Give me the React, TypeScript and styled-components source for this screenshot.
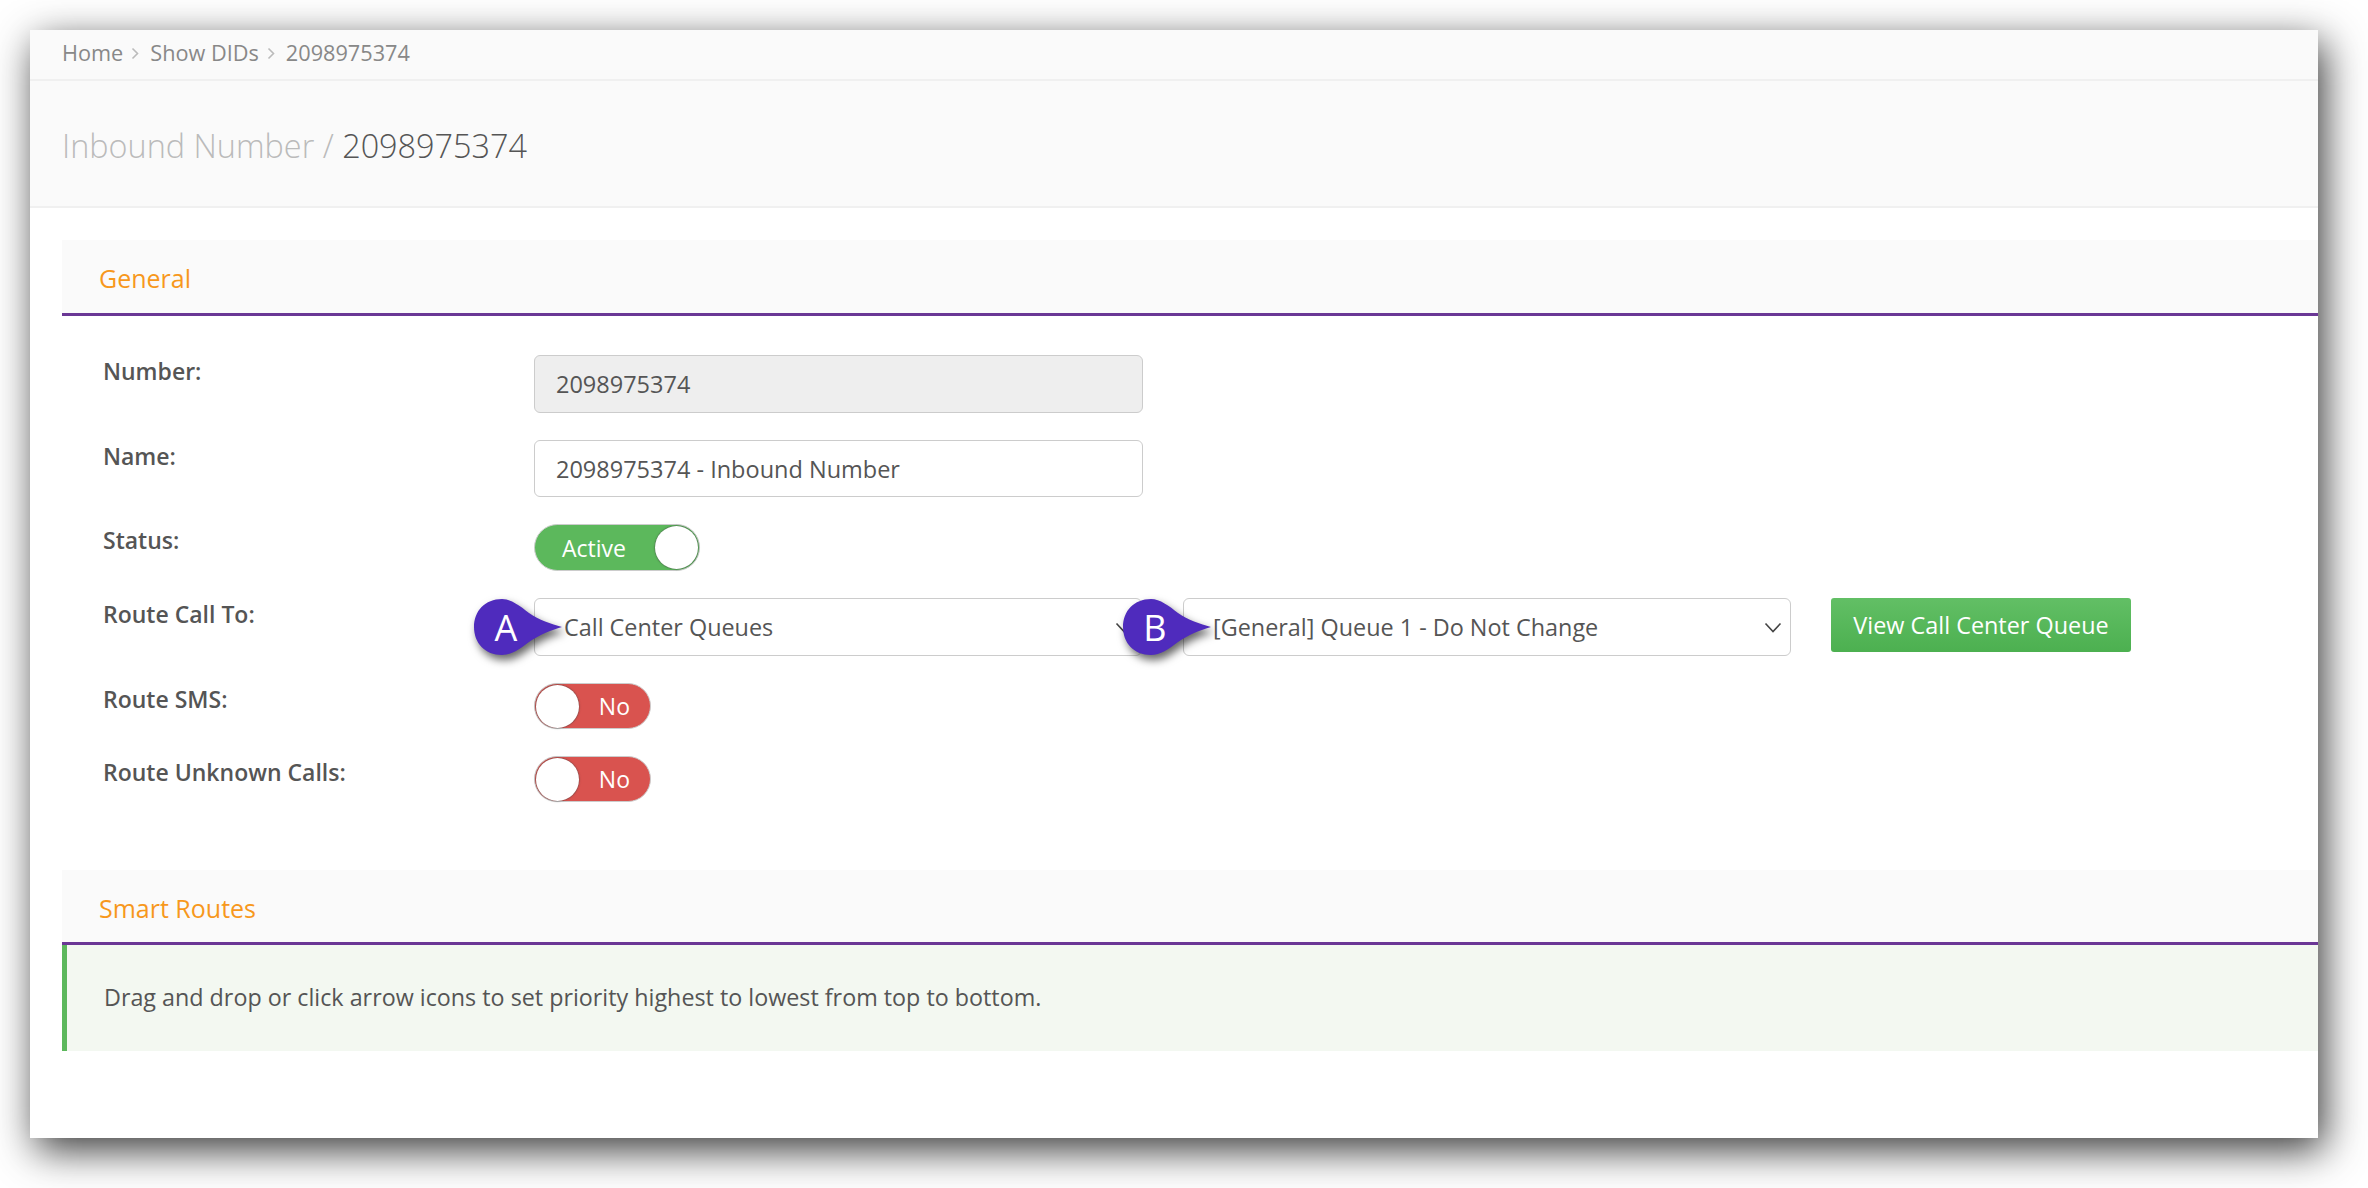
import styled, { createGlobalStyle } from "styled-components"

const Global = createGlobalStyle`
    html, body {
        margin: 0;
        background: #fff;
    }
    * {
        box-sizing: border-box;
    }
`

const Stage = styled.div`
    width: 2368px;
    height: 1188px;
    padding: 30px 50px 50px 30px;
    overflow: hidden;
    font-family: "Open Sans", sans-serif;
    color: #555;
`

const Window = styled.div`
    width: 2288px;
    height: 1108px;
    background: #fff;
    box-shadow: 6px 12px 38px rgba(0, 0, 0, 0.78);
    overflow: hidden;
`

const Breadcrumb = styled.div`
    height: 51px;
    padding: 0 33px 4px 32px;
    display: flex;
    align-items: center;
    background: #fafafa;
    border-bottom: 2px solid #f0f0f0;
    font-size: 21.7px;
    color: #888;
`

const Crumb = styled.span`
    color: #888;
`

const CrumbArrow = styled.svg`
    width: 8px;
    height: 13px;
    margin: 1px 11px 0 8px;
    fill: none;
    stroke: #bbb;
    stroke-width: 1.6;
`

const TitleBand = styled.div`
    height: 127px;
    padding: 2px 32px 0;
    display: flex;
    align-items: center;
    background: #fafafa;
    border-bottom: 2px solid #f0f0f0;
    font-size: 32.4px;
    font-weight: 300;
`

const TitleMuted = styled.span`
    color: #bbb;
    white-space: pre;
`

const TitleStrong = styled.span`
    color: #555;
`

const Section = styled.section<{ $top: number }>`
    margin: ${(p) => p.$top}px 0 0 32px;
`

const SectionHead = styled.div<{ $height: number }>`
    height: ${(p) => p.$height}px;
    padding: 3px 37px 0;
    display: flex;
    align-items: center;
    background: #fafafa;
    border-bottom: 3px solid #6a3795;
    font-size: 25px;
    color: #f7981c;
`

const Form = styled.div`
    padding-top: 39px;
    display: flex;
    flex-direction: column;
    gap: 27px;
`

const Row = styled.div`
    display: flex;
    align-items: flex-start;
`

const Label = styled.div`
    width: 472px;
    padding-left: 41px;
    flex: none;
    font-size: 23px;
    font-weight: 600;
    line-height: 33px;
    color: #555;
`

const Input = styled.div<{ $disabled?: boolean }>`
    width: 609px;
    height: ${(p) => (p.$disabled ? 58 : 57)}px;
    padding: 0 21px;
    display: flex;
    align-items: center;
    font-size: 23.5px;
    color: #555;
    background: ${(p) => (p.$disabled ? "#eee" : "#fff")};
    border: 1.5px solid #ccc;
    border-radius: 6px;
`

const SelectBox = styled.div<{ $gap: number }>`
    position: relative;
    width: 608px;
    height: 58px;
    margin-left: ${(p) => p.$gap}px;
    padding: 0 8px 0 29px;
    display: flex;
    align-items: center;
    justify-content: space-between;
    font-size: 23.4px;
    color: #555;
    background: #fff;
    border: 1.5px solid #ccc;
    border-radius: 6px;
`

const Chevron = styled.svg`
    width: 18px;
    height: 11px;
    fill: none;
    stroke: #444;
    stroke-width: 1.6;
`

const Pin = styled.div`
    position: absolute;
    left: -62px;
    top: -1px;
    width: 90px;
    height: 58px;
    display: flex;
    align-items: center;
    padding-left: 20px;
    font-size: 36px;
    font-weight: 500;
    color: #fff;
`

const PinShape = styled.svg`
    position: absolute;
    left: 0;
    top: 0;
    width: 90px;
    height: 58px;
    overflow: visible;
    filter: drop-shadow(3px 5px 4px rgba(0, 0, 0, 0.6));
`

const PinLetter = styled.span`
    position: relative;
    width: 26px;
    text-align: center;
`

const Button = styled.div`
    width: 300px;
    height: 54px;
    margin-left: 40px;
    display: flex;
    align-items: center;
    justify-content: center;
    font-size: 23.4px;
    color: #fff;
    background: linear-gradient(#62bf65, #4cb050);
    border-radius: 3px;
`

const Toggle = styled.div<{ $on: boolean; $width: number; $height: number }>`
    width: ${(p) => p.$width}px;
    height: ${(p) => p.$height}px;
    padding: ${(p) => (p.$on ? "0 1px 0 27px" : "0 20px 0 1px")};
    display: flex;
    flex-direction: ${(p) => (p.$on ? "row" : "row-reverse")};
    align-items: center;
    justify-content: space-between;
    font-size: 23px;
    line-height: 30px;
    color: #fff;
    background: ${(p) => (p.$on ? "#5cb85c" : "#d9534f")};
    border: 1px solid #ccc;
    border-radius: 24px;
`

const Knob = styled.span`
    width: 43px;
    height: 43px;
    flex: none;
    background: #fff;
    border-radius: 50%;
    box-shadow: 0 0 1.5px 0.5px rgba(60, 60, 60, 0.6);
`

const Alert = styled.div`
    height: 106px;
    padding: 0 0 2px 37px;
    display: flex;
    align-items: center;
    background: #f3f8f1;
    border-left: 5px solid #5cb85c;
    font-size: 23.3px;
    color: #555;
`

function Arrow() {
    return (
        <CrumbArrow viewBox="0 0 8 13">
            <path d="M1.5 1.5L6.5 6.5L1.5 11.5" />
        </CrumbArrow>
    )
}

function Marker({ letter }: { letter: string }) {
    return (
        <Pin>
            <PinShape viewBox="0 0 90 58">
                <path
                    d="M29 1C38 1 47 8 56 15C66 22 78 26 89 29C78 32 66 37 56 44C47 51 38 57 29 57C12 57 1 45 1 29C1 13 12 1 29 1Z"
                    fill="#4f2bbd"
                />
            </PinShape>
            <PinLetter>{letter}</PinLetter>
        </Pin>
    )
}

function Select({ value, letter, gap }: { value: string; letter: string; gap: number }) {
    return (
        <SelectBox $gap={gap}>
            <span>{value}</span>
            <Chevron viewBox="0 0 18 11">
                <path d="M1.5 1.5L9 9.5L16.5 1.5" />
            </Chevron>
            <Marker letter={letter} />
        </SelectBox>
    )
}

export default function App() {
    return (
        <Stage>
            <Global />
            <Window>
                <Breadcrumb>
                    <Crumb>Home</Crumb>
                    <Arrow />
                    <Crumb>Show DIDs</Crumb>
                    <Arrow />
                    <Crumb>2098975374</Crumb>
                </Breadcrumb>
                <TitleBand>
                    <TitleMuted>Inbound Number / </TitleMuted>
                    <TitleStrong>2098975374</TitleStrong>
                </TitleBand>
                <Section $top={32}>
                    <SectionHead $height={76}>General</SectionHead>
                    <Form>
                        <Row>
                            <Label>Number:</Label>
                            <Input $disabled>2098975374</Input>
                        </Row>
                        <Row>
                            <Label>Name:</Label>
                            <Input>2098975374 - Inbound Number</Input>
                        </Row>
                        <Row>
                            <Label>Status:</Label>
                            <Toggle $on $width={166} $height={47}>
                                Active
                                <Knob />
                            </Toggle>
                        </Row>
                        <Row>
                            <Label>Route Call To:</Label>
                            <Select value="Call Center Queues" letter="A" gap={0} />
                            <Select value="[General] Queue 1 - Do Not Change" letter="B" gap={41} />
                            <Button>View Call Center Queue</Button>
                        </Row>
                        <Row>
                            <Label>Route SMS:</Label>
                            <Toggle $on={false} $width={117} $height={46}>
                                No
                                <Knob />
                            </Toggle>
                        </Row>
                        <Row>
                            <Label>Route Unknown Calls:</Label>
                            <Toggle $on={false} $width={117} $height={46}>
                                No
                                <Knob />
                            </Toggle>
                        </Row>
                    </Form>
                </Section>
                <Section $top={68}>
                    <SectionHead $height={75}>Smart Routes</SectionHead>
                    <Alert>Drag and drop or click arrow icons to set priority highest to lowest from top to bottom.</Alert>
                </Section>
            </Window>
        </Stage>
    )
}
